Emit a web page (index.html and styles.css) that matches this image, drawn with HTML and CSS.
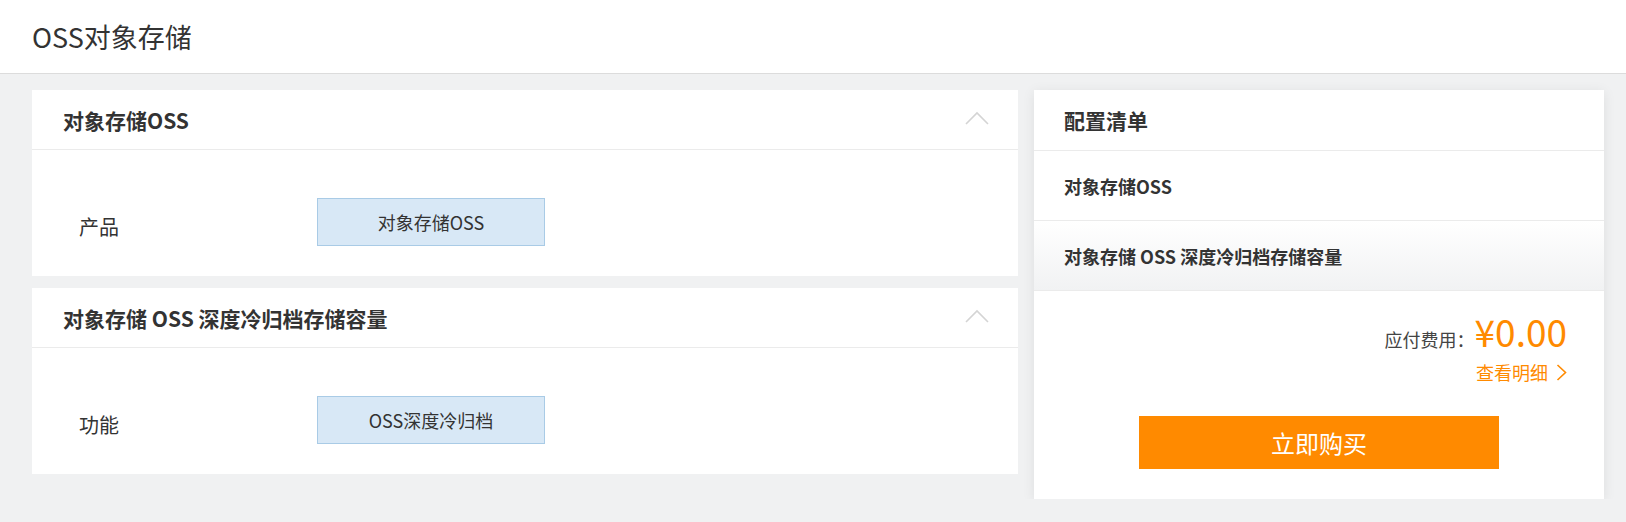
FILE: index.html
```html
<!DOCTYPE html>
<html lang="zh-CN">
<head>
<meta charset="UTF-8">
<meta name="viewport" content="width=device-width, initial-scale=1.0">
<title>OSS对象存储</title>
<link rel="stylesheet" href="styles.css">
</head>
<body>

<div class="page-head">OSS对象存储</div>

<div class="main">
    <div class="left">
        <div class="card">
            <div class="card-head">
                <span class="card-title">对象存储OSS</span>
                <svg class="fold" width="24" height="14" viewBox="0 0 24 14"><polyline points="1,13 12,2 23,13" fill="none" stroke="#d4d4d4" stroke-width="1.6"/></svg>
            </div>
            <div class="card-body">
                <span class="label">产品</span>
                <div class="option">对象存储OSS</div>
            </div>
        </div>

        <div class="card">
            <div class="card-head">
                <span class="card-title">对象存储 OSS 深度冷归档存储容量</span>
                <svg class="fold" width="24" height="14" viewBox="0 0 24 14"><polyline points="1,13 12,2 23,13" fill="none" stroke="#d4d4d4" stroke-width="1.6"/></svg>
            </div>
            <div class="card-body">
                <span class="label">功能</span>
                <div class="option">OSS深度冷归档</div>
            </div>
        </div>
    </div>

    <div class="summary">
        <div class="summary-head">配置清单</div>
        <div class="summary-item">对象存储OSS</div>
        <div class="summary-item shaded">对象存储 OSS 深度冷归档存储容量</div>
        <div class="summary-foot">
            <div class="price-row">
                <span class="price-label">应付费用：</span>
                <span class="price">¥0.00</span>
            </div>
            <a class="detail" href="#">查看明细
                <svg width="11" height="17" viewBox="0 0 11 17"><polyline points="1.5,1 9.5,8.5 1.5,16" fill="none" stroke="#ff8a00" stroke-width="1.6"/></svg>
            </a>
            <button class="buy">立即购买</button>
        </div>
    </div>
</div>

</body>
</html>
```

FILE: styles.css
```css
body{margin: 0;
    background-color: #f0f1f2;
    color: #333333;
    font-family: "Noto Sans CJK SC", "Noto Sans", sans-serif;}

.page-head{height: 73px;
    line-height: 73px;
    padding-left: 32px;
    background-color: #ffffff;
    border-bottom: 1px solid #dcdcdc;
    font-size: 27px;
    color: #333333;}

.main{display: flex;
    align-items: flex-start;
    gap: 16px;
    padding: 16px 22px 0 32px;}

.left{width: 986px;
    display: flex;
    flex-direction: column;
    gap: 12px;}

.card{background-color: #ffffff;}

.card-head{height: 59px;
    padding: 0 29px 0 31px;
    display: flex;
    align-items: center;
    justify-content: space-between;
    border-bottom: 1px solid #ebebeb;}

.card-title{font-size: 21px;
    font-weight: bold;
    color: #333333;}

.fold{display: block;
    margin-top: -4px;}

.card-body{height: 126px;
    padding: 48px 0 0 47px;
    box-sizing: border-box;
    display: flex;
    align-items: flex-start;}

.label{width: 238px;
    margin-top: 15px;
    font-size: 20px;
    line-height: 28px;
    color: #333333;}

.option{width: 228px;
    height: 48px;
    box-sizing: border-box;
    display: flex;
    align-items: center;
    justify-content: center;
    background-color: #d8e8f6;
    border: 1px solid #a9cbe6;
    font-size: 18px;
    color: #333333;}

.summary{width: 570px;
    background-color: #ffffff;
    box-shadow: 0 2px 12px rgba(0, 0, 0, 0.08);}

.summary-head{height: 60px;
    padding-left: 30px;
    display: flex;
    align-items: center;
    border-bottom: 1px solid #ebebeb;
    font-size: 21px;
    font-weight: bold;}

.summary-item{height: 69px;
    padding-left: 30px;
    display: flex;
    align-items: center;
    border-bottom: 1px solid #ebebeb;
    font-size: 18px;
    font-weight: bold;}

.shaded{background: linear-gradient(#ffffff, #f1f2f3);}

.summary-foot{padding: 16px 37px 30px 37px;
    display: flex;
    flex-direction: column;
    align-items: flex-end;}

.price-row{display: flex;
    align-items: baseline;}

.price-label{font-size: 18px;
    color: #444444;}

.price{font-size: 37px;
    line-height: 48px;
    color: #ff8a00;}

.detail{display: flex;
    align-items: center;
    gap: 8px;
    margin-top: 5px;
    font-size: 18px;
    line-height: 24px;
    color: #ff8a00;
    text-decoration: none;}

.buy{align-self: center;
    width: 360px;
    height: 53px;
    margin-top: 32px;
    border: none;
    background-color: #ff8a00;
    color: #ffffff;
    font-family: "Noto Sans CJK SC", sans-serif;
    font-size: 24px;
    cursor: pointer;}
```
